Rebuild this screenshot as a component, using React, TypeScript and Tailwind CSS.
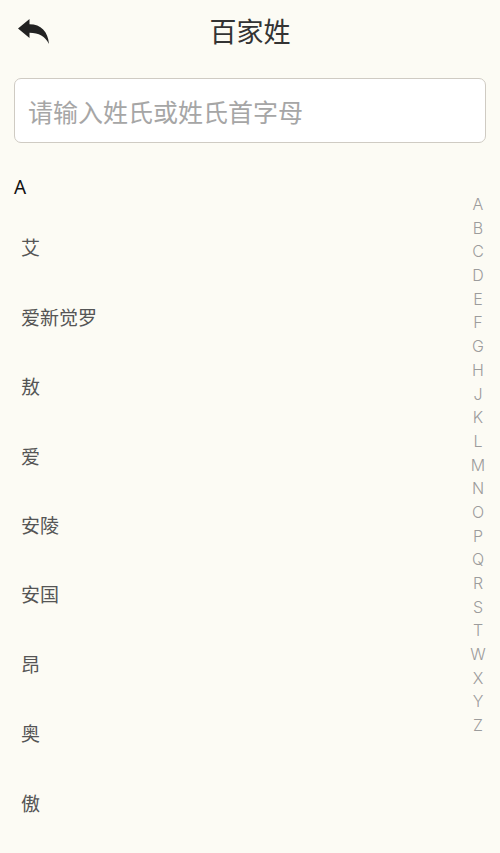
import React from "react";

const letters = ["A","B","C","D","E","F","G","H","J","K","L","M","N","O","P","Q","R","S","T","W","X","Y","Z"];
const names = ["艾","爱新觉罗","敖","爱","安陵","安国","昂","奥","傲"];

export default function App() {
  return (
    <div
      className="relative w-[500px] h-[853px] overflow-hidden bg-[#fcfbf4]"
      style={{ fontFamily: '"Noto Sans CJK SC", "Noto Sans", sans-serif' }}
    >
      <div className="relative h-[64px] flex items-center justify-center pb-[3px]">
        <button className="absolute left-[18px] top-[19px] w-[31px] h-[25px]">
          <svg viewBox="0 0 31 25" width="31" height="25">
            <path d="M0 9.5 L11.5 0 V5.2 C23 5.2 30 12.5 31 25 C27 17.5 21 13.8 11.5 13.8 V19 Z" fill="#222" />
          </svg>
        </button>
        <h1 className="text-[27px] leading-none text-[#333] font-normal">百家姓</h1>
      </div>

      <div className="mx-[14px] mt-[14px] h-[65px] rounded-[7px] border border-[#cfcbc3] bg-white flex items-center px-[13px] pt-[3px]">
        <input
          className="w-full bg-transparent outline-none text-[25px] text-[#333] placeholder:text-[#a6a6a6]"
          placeholder="请输入姓氏或姓氏首字母"
        />
      </div>

      <div className="h-[70px] flex items-center pt-[18px] pl-[14px]">
        <span className="text-[19px] leading-none text-[#111]" style={{ fontFamily: '"Noto Sans", sans-serif' }}>A</span>
      </div>

      <ul>
        {names.map((n, i) => (
          <li key={i} className="h-[69.4px] flex items-center pl-[21px] text-[19px] text-[#555]">
            {n}
          </li>
        ))}
      </ul>

      <div className="absolute top-[193px] right-[10px] w-[24px] flex flex-col items-center">
        {letters.map((l) => (
          <span
            key={l}
            className="h-[23.7px] leading-[23.7px] text-[16px] font-light text-[#9c9c9c]"
            style={{ fontFamily: 'Inter, "Noto Sans", sans-serif' }}
          >
            {l}
          </span>
        ))}
      </div>
    </div>
  );
}
